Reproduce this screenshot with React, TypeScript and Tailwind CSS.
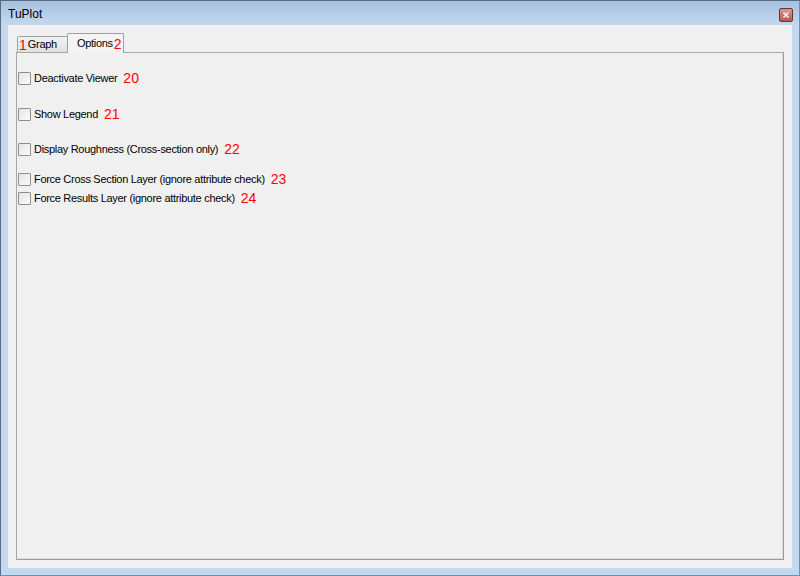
import React from 'react';

const rows: { label: string; num: string; gap: string }[] = [
    { label: 'Deactivate Viewer', num: '20', gap: 'mt-[17px]' },
    { label: 'Show Legend', num: '21', gap: 'mt-[20px]' },
    { label: 'Display Roughness (Cross-section only)', num: '22', gap: 'mt-[19px]' },
    { label: 'Force Cross Section Layer (ignore attribute check)', num: '23', gap: 'mt-[14px]' },
    { label: 'Force Results Layer (ignore attribute check)', num: '24', gap: 'mt-[3px]' },
];

const CheckRow: React.FC<{ label: string; num: string; gap: string }> = ({ label, num, gap }) => (
    <div className={`flex items-center h-[16px] ${gap}`}>
        <div className="w-[13px] h-[13px] border border-[#8f8f8f] bg-gradient-to-br from-[#e4e4e4] to-[#fbfbfb] rounded-[1px]" />
        <span className="ml-[3px] text-[11px] tracking-[-0.3px] text-black leading-none">{label}</span>
        <span className="ml-[6px] text-[14px] text-[#ff0000] leading-none">{num}</span>
    </div>
);

export default function App() {
    return (
        <div className="w-[800px] h-[576px] bg-[#c3d8ee] border border-[#5a6b80] border-r-[#2fa9d8] border-b-[#2fa9d8] flex flex-col font-['Liberation_Sans',Arial,sans-serif] overflow-hidden">
            <div className="h-[24px] flex items-center justify-between pl-[7px] pr-[6px] bg-gradient-to-b from-[#a6c2e0] to-[#c3d8ee] shrink-0">
                <span className="text-[12px] text-black pt-[1px]">TuPlot</span>
                <div className="w-[14px] h-[14px] border border-[#5a3a40] bg-gradient-to-b from-[#d99a90] to-[#b8584e] rounded-[2px] flex items-center justify-center mt-[4px]">
                    <svg width="8" height="8" viewBox="0 0 8 8">
                        <path d="M1.5 1.5 L6.5 6.5 M6.5 1.5 L1.5 6.5" stroke="#f4f4f4" strokeWidth="1.6" />
                    </svg>
                </div>
            </div>
            <div className="flex-1 mx-[7px] mb-[7px] bg-[#f0f0f0] flex flex-col pt-[8px] pl-[8px] pr-[8px] pb-[8px]">
                <div className="flex items-end h-[19px] pl-[1px] shrink-0 relative z-10">
                    <div className="h-[16px] w-[51px] border border-[#a0a0a0] border-b-0 rounded-t-[2px] bg-gradient-to-b from-[#f2f2f2] to-[#e0e0e0] flex items-center pl-[1px]">
                        <span className="text-[14px] text-[#ff0000] leading-none">1</span>
                        <span className="text-[11px] tracking-[-0.3px] text-black leading-none ml-[1px]">Graph</span>
                    </div>
                    <div className="h-[20px] w-[57px] ml-[-1px] border border-[#a0a0a0] border-b-0 rounded-t-[2px] bg-[#f4f4f4] flex items-center pl-[9px] mb-[-1px]">
                        <span className="text-[11px] tracking-[-0.3px] text-black leading-none">Options</span>
                        <span className="text-[14px] text-[#ff0000] leading-none ml-[1px]">2</span>
                    </div>
                </div>
                <div className="flex-1 border border-[#a8a8a8] border-r-[#9a9a9a] border-b-[#9a9a9a] bg-[#f0f0f0] flex flex-col pl-[1px] shadow-[inset_-1px_-1px_0_#dcdcdc]">
                    {rows.map((r) => (
                        <CheckRow key={r.num} label={r.label} num={r.num} gap={r.gap} />
                    ))}
                </div>
            </div>
        </div>
    );
}
